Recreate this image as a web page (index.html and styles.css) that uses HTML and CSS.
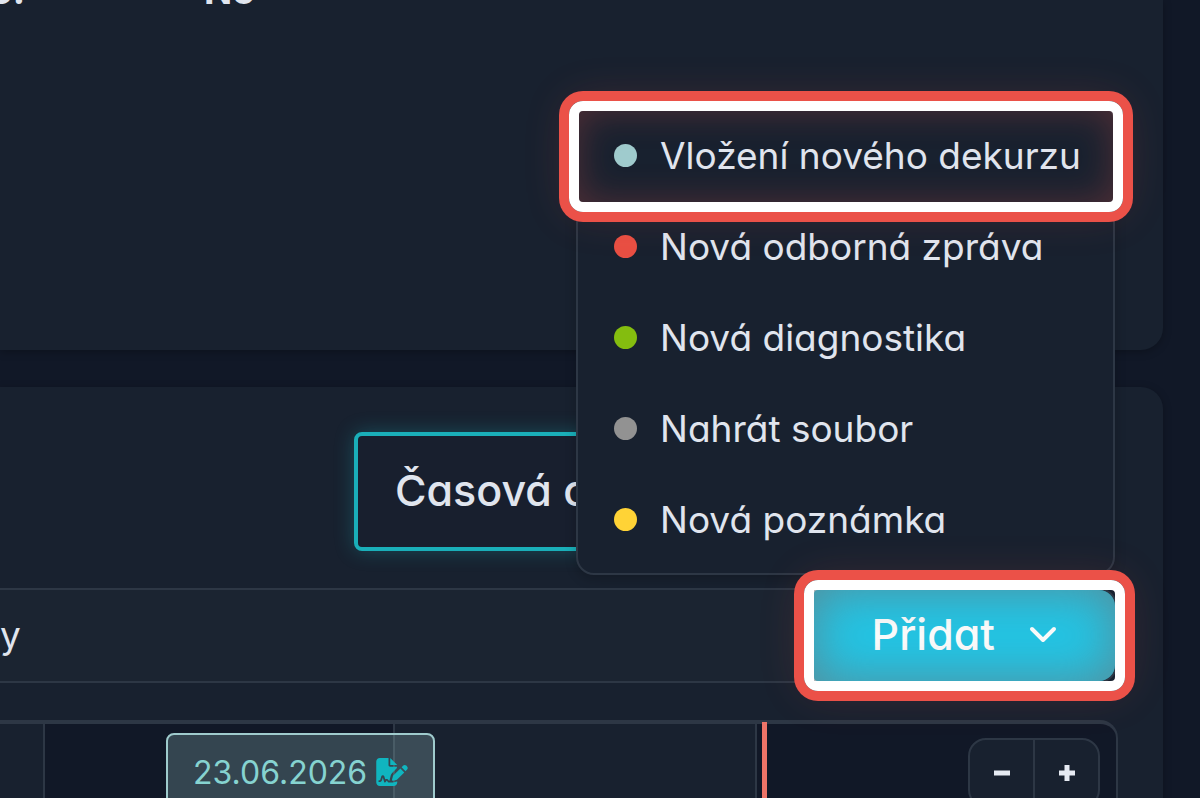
FILE: index.html
```html
<!DOCTYPE html>
<html lang="cs">
<head>
<meta charset="utf-8">
<meta name="viewport" content="width=device-width, initial-scale=1">
<title>Časová osa</title>
<link rel="stylesheet" href="styles.css">
</head>
<body>
<main class="page">
  <section class="card card_info">
    <dl class="info">
      <dt>o:</dt>
      <dd>Ne</dd>
    </dl>
  </section>

  <section class="card card_time">
    <div class="tabs">
      <button type="button" class="tab">Časová osa</button>
    </div>

    <div class="toolbar">
      <span class="toolbar_label">y</span>
      <div class="add">
        <button type="button" class="add_btn marked" aria-expanded="true">
          <span>Přidat</span>
          <svg width="28" height="18" viewBox="0 0 28 18"><path d="M3 4l11 11L25 4" fill="none" stroke="#fff" stroke-width="4" stroke-linecap="round" stroke-linejoin="round"/></svg>
        </button>
        <ul class="menu">
          <li><button type="button" class="menu_item marked"><i class="dot dot_aqua"></i>Vložení nového dekurzu</button></li>
          <li><button type="button" class="menu_item"><i class="dot dot_red"></i>Nová odborná zpráva</button></li>
          <li><button type="button" class="menu_item"><i class="dot dot_green"></i>Nová diagnostika</button></li>
          <li><button type="button" class="menu_item"><i class="dot dot_gray"></i>Nahrát soubor</button></li>
          <li><button type="button" class="menu_item"><i class="dot dot_yellow"></i>Nová poznámka</button></li>
        </ul>
      </div>
    </div>

    <div class="timeline">
      <div class="col col_first"></div>
      <div class="col col_night"></div>
      <div class="col col_day"></div>
      <div class="col col_rest">
        <div class="zoom">
          <button type="button" aria-label="Oddálit"><svg width="18" height="18" viewBox="0 0 18 18"><path d="M1 9h16" stroke="#e5eaf2" stroke-width="5"/></svg></button>
          <button type="button" aria-label="Přiblížit"><svg width="18" height="18" viewBox="0 0 18 18"><path d="M1 9h16M9 1v16" stroke="#e5eaf2" stroke-width="5"/></svg></button>
        </div>
      </div>
      <div class="now"></div>
      <a href="#" class="event">23.06.2026
        <svg width="32" height="28" viewBox="0 0 576 512"><path fill="#10b5bf" d="M64 0C29 0 0 29 0 64v384c0 35 29 64 64 64h256c35 0 64-29 64-64v-19l-8 2-72 18c-2 1-5 1-8 1h-72c-6 0-12-4-14-9l-9-19c-2-3-5-5-9-5s-7 2-8 5l-10 19c-3 6-9 9-15 9s-12-4-14-10l-25-83-15 49c-6 21-25 34-46 34h-5c-9 0-16-7-16-16s7-16 16-16h5c7 0 13-5 15-12l19-61c4-13 14-20 27-20s23 7 27 20l17 57c6-6 14-9 23-9 16 0 30 9 37 23l3 5h22c-3-8-3-17-1-26l18-71c4-14 11-27 21-37l91-92V160H256c-18 0-32-14-32-32V0zM256 0v128h128zM550 139c-16-15-41-15-57 0l-29 30 71 71 29-30c16-15 16-41 0-56zM311 321c-4 4-7 9-8 15l-15 60c-2 5 0 11 4 15s10 6 15 5l60-15c6-2 11-4 15-9l130-129-71-71z"/></svg>
      </a>
    </div>
  </section>
</main>
</body>
</html>
```
FILE: styles.css
```css
* {
	box-sizing: border-box;
	margin: 0;
	padding: 0;
}
body {
	background: #111827;
	color: #e0e5ee;
	font-family: Inter, "Noto Sans", sans-serif;
	font-feature-settings: "cv11";
	font-size: 37px;
	overflow: hidden;
}
button {
	border: 0;
	background: none;
	color: inherit;
	font: inherit;
	font-feature-settings: inherit;
	cursor: pointer;
}
svg {
	display: block;
}
.page {
	display: flex;
	flex-direction: column;
	gap: 37px;
	height: 100vh;
	padding-right: 37px;
}
.card {
	background: #18212f;
	box-shadow: 0 2px 8px rgba(0, 0, 0, .25);
}
.card_info {
	flex: none;
	min-height: 350px;
	border-radius: 0 0 22px 0;
}
.info {
	display: flex;
	margin-top: -32px;
	margin-left: -10px;
	line-height: 46px;
	font-weight: bold;
}
.info dt {
	width: 214px;
}
.card_time {
	display: flex;
	flex: 1;
	flex-direction: column;
	padding: 45px 46px 0 0;
	border-radius: 0 22px 0 0;
}
.tabs {
	display: flex;
	padding-left: 354px;
	margin-bottom: 37px;
}
.tab {
	height: 119px;
	padding: 0 37px 4px;
	border: 4px solid #1aafb9;
	border-radius: 8px;
	background: #181f2e;
	font-size: 43px;
	font-weight: 500;
	box-shadow: 0 0 20px rgba(26, 175, 185, .3);
}

/* toolbar */
.toolbar {
	display: flex;
	align-items: center;
	justify-content: space-between;
	height: 95px;
	margin-bottom: 37px;
	border: 2px solid #2d3745;
	border-left: 0;
	border-radius: 0 18px 18px 0;
	background: #1b2431;
}
.toolbar_label {
	padding-bottom: 2px;
	font-size: 37px;
}
.add {
	position: relative;
	height: 91px;
}
.add_btn {
	display: flex;
	align-items: center;
	gap: 34px;
	height: 100%;
	padding: 0 58px 4px;
	border-radius: 0 16px 16px 0;
	background: #22c5e5;
	color: #fff;
	font-size: 43px;
	font-weight: 500;
}
.menu {
	position: absolute;
	z-index: 1;
	right: 0;
	bottom: calc(100% + 15px);
	width: 539px;
	padding: 7px 0 7px 1px;
	border: 2px solid #2d3745;
	border-radius: 18px;
	background: #18212f;
	box-shadow: 0 4px 12px rgba(0, 0, 0, .2);
	list-style: none;
}
.menu_item {
	display: flex;
	align-items: center;
	gap: 23px;
	width: 100%;
	height: 91px;
	padding: 0 35px 2px;
	white-space: nowrap;
}
.dot {
	flex: none;
	width: 23px;
	height: 23px;
	border-radius: 50%;
}
.dot_aqua { background: #9fcbcd; }
.dot_red { background: #e84f43; }
.dot_green { background: #84bd0f; }
.dot_gray { background: #929292; }
.dot_yellow { background: #ffd336; }

/* red and white frame */
.marked {
	position: relative;
}
.marked::before {
	content: "";
	position: absolute;
	inset: -10px;
	border: 10px solid #fff;
	border-radius: 14px;
	box-shadow: 0 0 0 10px #eb5148, 0 0 46px rgba(235, 81, 72, .2);
}
.marked::after {
	content: "";
	position: absolute;
	inset: 0;
	border-radius: 4px;
	box-shadow: inset 0 0 36px rgba(235, 81, 72, .28);
}
.add_btn.marked {
	z-index: 2;
}
.add_btn.marked::after {
	border-radius: 0 16px 16px 0;
	box-shadow: inset 0 0 50px rgba(110, 115, 120, .7);
}

/* timeline */
.timeline {
	position: relative;
	display: flex;
	flex: 1;
	margin-right: -1px;
	border-top: 4px solid #2d3745;
	border-right: 2px solid #2d3745;
	border-radius: 0 18px 0 0;
	background: #111827;
}
.col {
	border-right: 2px solid #2d3745;
}
.col_first {
	width: 45px;
	background: #18212f;
}
.col_night {
	width: 350px;
}
.col_day {
	width: 362px;
	background: #18212f;
}
.col_rest {
	flex: 1;
	padding: 14px 16px 0 0;
	border-right: 0;
}
.zoom {
	display: flex;
	width: 132px;
	height: 70px;
	margin-left: auto;
	border: 2px solid #2d3745;
	border-radius: 18px;
	background: #18212f;
}
.zoom button {
	display: flex;
	align-items: center;
	justify-content: center;
	flex: 1;
}
.zoom button + button {
	border-left: 2px solid #2d3745;
}
.now {
	position: absolute;
	top: -2px;
	bottom: 0;
	left: 762px;
	width: 5px;
	background: #ee7468;
}
.event {
	position: absolute;
	top: 9px;
	left: 166px;
	display: flex;
	align-items: center;
	justify-content: space-between;
	width: 269px;
	height: 78px;
	padding: 0 25px;
	border: 2px solid #9fcbcd;
	border-radius: 8px;
	background: rgba(159, 203, 205, .25);
	color: #86d3d0;
	font-size: 32px;
	text-decoration: none;
}
```
